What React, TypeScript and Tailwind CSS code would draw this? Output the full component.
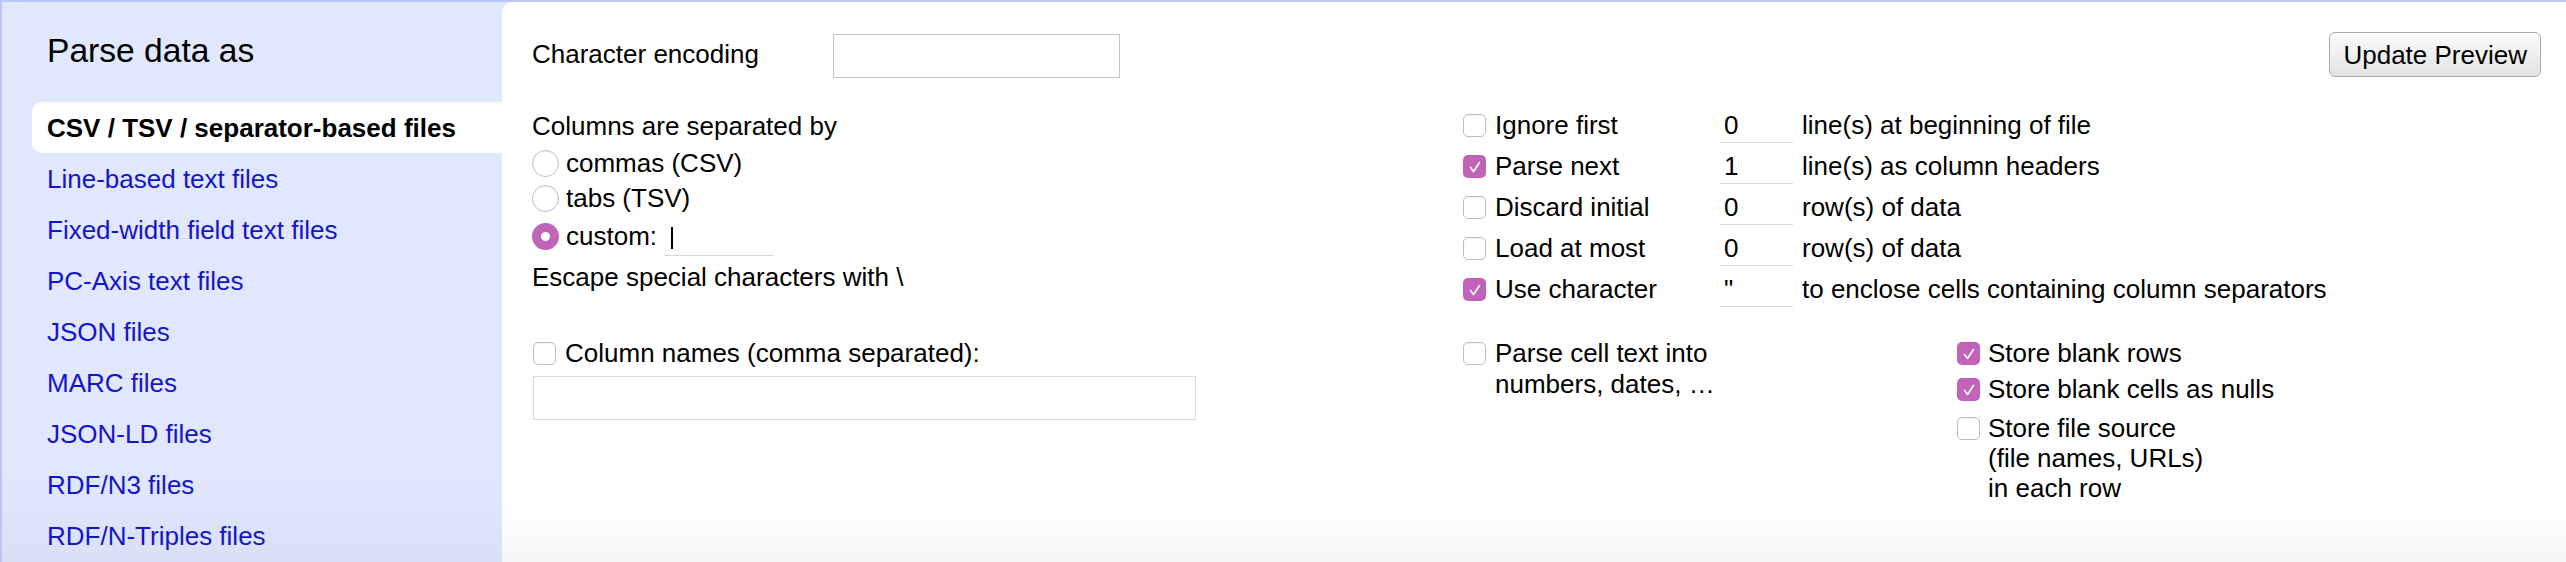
import React from 'react';

const formats = [
  'Line-based text files',
  'Fixed-width field text files',
  'PC-Axis text files',
  'JSON files',
  'MARC files',
  'JSON-LD files',
  'RDF/N3 files',
  'RDF/N-Triples files',
];

const options = [
  { on: false, label: 'Ignore first', value: '0', desc: 'line(s) at beginning of file' },
  { on: true, label: 'Parse next', value: '1', desc: 'line(s) as column headers' },
  { on: false, label: 'Discard initial', value: '0', desc: 'row(s) of data' },
  { on: false, label: 'Load at most', value: '0', desc: 'row(s) of data' },
  { on: true, label: 'Use character', value: '"', desc: 'to enclose cells containing column separators' },
];

function Check({ on = false }: { on?: boolean }) {
  if (on) {
    return (
      <span className="mt-[4px] flex h-[23px] w-[23px] shrink-0 items-center justify-center rounded-[5px] bg-[#c063b9]">
        <svg viewBox="0 0 24 24" className="h-[18px] w-[18px]" fill="none" stroke="white" strokeWidth={2.2} strokeLinecap="round" strokeLinejoin="round">
          <path d="M6 12.5l4 5.5 8-12" />
        </svg>
      </span>
    );
  }
  return <span className="mt-[4px] block h-[23px] w-[23px] shrink-0 rounded-[5px] border border-[#bdbdbd] bg-white shadow-[inset_0_1px_1px_rgba(0,0,0,0.05)]" />;
}

function Radio({ on = false }: { on?: boolean }) {
  if (on) {
    return (
      <span className="mt-[2px] flex h-[27px] w-[27px] shrink-0 items-center justify-center rounded-full bg-[#c063b9]">
        <span className="h-[9px] w-[9px] rounded-full bg-white" />
      </span>
    );
  }
  return <span className="mt-[2px] block h-[27px] w-[27px] shrink-0 rounded-full border border-[#bdbdbd] bg-white shadow-[inset_0_1px_1px_rgba(0,0,0,0.05)]" />;
}

export default function App() {
  return (
    <div className="flex h-[562px] w-full border-l-2 border-t-2 border-[#b8c8f5] bg-[linear-gradient(to_bottom,#e1e7fd_470px,#dae1f7)] font-['Liberation_Sans',Arial,sans-serif] text-[26px] leading-[30px] text-black">
      {/* sidebar */}
      <div className="w-[500px] shrink-0 pt-[29px]">
        <h1 className="pl-[45px] text-[33.6px] leading-[40px] font-normal">Parse data as</h1>
        <div className="mt-[31px] flex flex-col">
          <div className="ml-[30px] flex h-[51px] items-center rounded-l-[10px] bg-white pl-[15px] font-bold">
            CSV / TSV / separator-based files
          </div>
          {formats.map((f) => (
            <div key={f} className="flex h-[51px] items-center pl-[45px] text-[#1515c8]">
              {f}
            </div>
          ))}
        </div>
      </div>

      {/* options panel */}
      <div className="flex-1 rounded-tl-[10px] bg-[linear-gradient(to_bottom,#ffffff_503px,#f6f6f6)] pl-[30px] pr-[25px] pt-[30px]">
        <div className="flex h-[46px] items-start justify-between">
          <div className="flex items-start">
            <div className="mt-[7px] w-[301px]">Character encoding</div>
            <div className="mt-[2px] h-[44px] w-[287px] border border-[#c4c4c4] bg-white" />
          </div>
          <button className="h-[45px] rounded-[6px] border border-[#ababab] bg-[linear-gradient(to_bottom,#fbfbfb,#e3e3e3)] px-[13px] leading-[30px]">
            Update Preview
          </button>
        </div>

        <div className="mt-[32px] grid grid-cols-[931px_494px_1fr]">
          <div className="flex flex-col pt-[1px]">
            <div className="h-[37px]">Columns are separated by</div>
            <div className="flex h-[35px] items-start gap-[7px]">
              <Radio />
              <span>commas (CSV)</span>
            </div>
            <div className="flex h-[38px] items-start gap-[7px]">
              <Radio />
              <span>tabs (TSV)</span>
            </div>
            <div className="flex h-[41px] items-start gap-[7px]">
              <Radio on />
              <span>custom:</span>
              <div className="relative h-[35px] w-[109px] border-b border-[#d6d6d6]">
                <span className="absolute left-[7px] top-[6px] h-[22px] w-[2px] bg-black" />
              </div>
            </div>
            <div>Escape special characters with \</div>
          </div>

          <div className="col-span-2 flex flex-col">
            {options.map((o) => (
              <div key={o.label} className="flex h-[41px] items-start">
                <Check on={o.on} />
                <span className="ml-[9px] w-[225px]">{o.label}</span>
                <div className="h-[33px] w-[73px] border-b border-[#d9d9d9] pl-[4px]">{o.value}</div>
                <span className="ml-[9px]">{o.desc}</span>
              </div>
            ))}
          </div>
        </div>

        <div className="mt-[23px] grid grid-cols-[931px_494px_1fr]">
          <div className="flex flex-col">
            <div className="flex items-start gap-[9px] pl-[1px]">
              <Check />
              <span>Column names (comma separated):</span>
            </div>
            <div className="ml-[1px] mt-[8px] h-[44px] w-[663px] border border-[#dcdcdc] bg-white" />
          </div>

          <div className="flex items-start gap-[9px]">
            <Check />
            <span className="leading-[31px]">
              Parse cell text into
              <br />
              numbers, dates, …
            </span>
          </div>

          <div className="flex flex-col">
            <div className="flex h-[36px] items-start gap-[8px]">
              <Check on />
              <span>Store blank rows</span>
            </div>
            <div className="flex h-[39px] items-start gap-[8px]">
              <Check on />
              <span>Store blank cells as nulls</span>
            </div>
            <div className="flex items-start gap-[8px]">
              <Check />
              <span>
                Store file source
                <br />
                (file names, URLs)
                <br />
                in each row
              </span>
            </div>
          </div>
        </div>
      </div>
    </div>
  );
}
